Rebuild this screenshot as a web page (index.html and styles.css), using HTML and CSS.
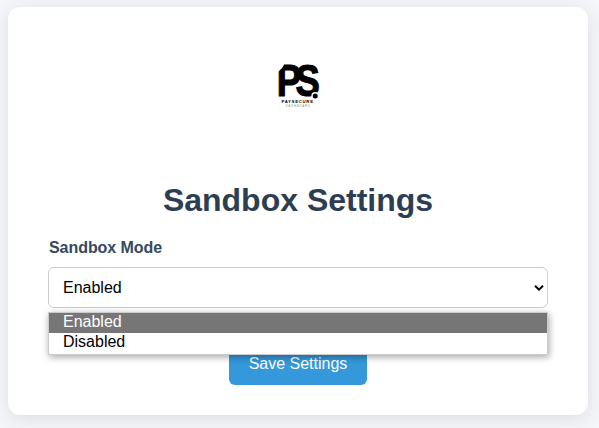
FILE: index.html
```html
<!DOCTYPE html>
<html lang="en">
<head>
<meta charset="utf-8">
<title>Sandbox Settings</title>
<link rel="stylesheet" href="styles.css">
</head>
<body>
<main class="card">
  <svg class="logo" width="62" height="60" viewBox="0 0 62 60" role="img" aria-label="Paysecure">
    <text class="logo-mark" transform="translate(9.8 42) scale(.81 1)">PS</text>
    <path d="M9 8H17.5Q17 15 9 18.5Z" fill="#fff"/>
    <circle cx="48.2" cy="42" r="3.9" fill="#fff"/>
    <circle cx="48.2" cy="42" r="2.5"/>
    <text class="logo-name" x="14.4" y="49.4" textLength="31.6">PAYSECURE</text>
    <text class="logo-sub" x="18.8" y="53.2" textLength="24">DASHBOARD</text>
  </svg>
  <h1 class="title">Sandbox Settings</h1>
  <div class="label">Sandbox Mode</div>
  <div class="field">
    <div class="select">
      <span>Enabled</span>
      <svg class="chevron" width="10" height="8" viewBox="0 0 10 8"><path d="M1 1.7 5 5.6 9 1.7" fill="none" stroke="#000" stroke-width="2"/></svg>
    </div>
    <div class="menu">
      <div class="option selected">Enabled</div>
      <div class="option">Disabled</div>
    </div>
  </div>
  <button class="save">Save Settings</button>
</main>
</body>
</html>
```
FILE: styles.css
```css
* { box-sizing: border-box; }
html { height: 100%; overflow: hidden; }
body {
  margin: 0;
  height: 428px;
  padding: 7px 11px 13px 8px;
  background: #f4f6fa;
  font-family: "Liberation Sans", Arial, sans-serif;
  font-size: 16px;
}
.card {
  width: 580px;
  height: 408px;
  padding: 47px 40px 30px;
  display: flex;
  flex-direction: column;
  align-items: center;
  background: #fff;
  border-radius: 12px;
  box-shadow: 0 4px 20px rgba(0, 0, 0, .1);
}
.logo { flex: none; }
.logo-mark {
  font: bold 45px "Liberation Sans", Arial, sans-serif;
  letter-spacing: -7px;
  stroke: #000;
  stroke-width: 1.2px;
}
.logo-name { font: bold 4.3px "Liberation Sans", Arial, sans-serif; }
.logo-sub { font: 2.8px "Liberation Sans", Arial, sans-serif; fill: #888; }
.title {
  margin: 68px 0 0;
  font-size: 32px;
  line-height: 36px;
  color: #2c3e50;
}
.label {
  align-self: flex-start;
  margin: 21px 0 10px 1px;
  font-weight: bold;
  letter-spacing: -.06px;
  line-height: 18px;
  color: #34495e;
}
.field { position: relative; width: 500px; }
.select {
  display: flex;
  align-items: center;
  justify-content: space-between;
  height: 41px;
  padding: 0 3px 0 14px;
  border: 1px solid #ccc;
  border-radius: 6px;
  background: #fff;
}
.menu {
  position: absolute;
  top: 45px;
  left: 0;
  width: 500px;
  height: 43px;
  border: 1px solid #ccc;
  background: #fff;
  box-shadow: 1px 2px 7px rgba(0, 0, 0, .36);
}
.option {
  height: 20px;
  padding-left: 14px;
  line-height: 18px;
}
.selected { background: #767676; color: #fff; }
.save {
  width: 138px;
  height: 42px;
  margin-top: 35px;
  padding: 0;
  border: 0;
  border-radius: 6px;
  background: #3498db;
  color: #fff;
  font: 16px "Liberation Sans", Arial, sans-serif;
}
```
